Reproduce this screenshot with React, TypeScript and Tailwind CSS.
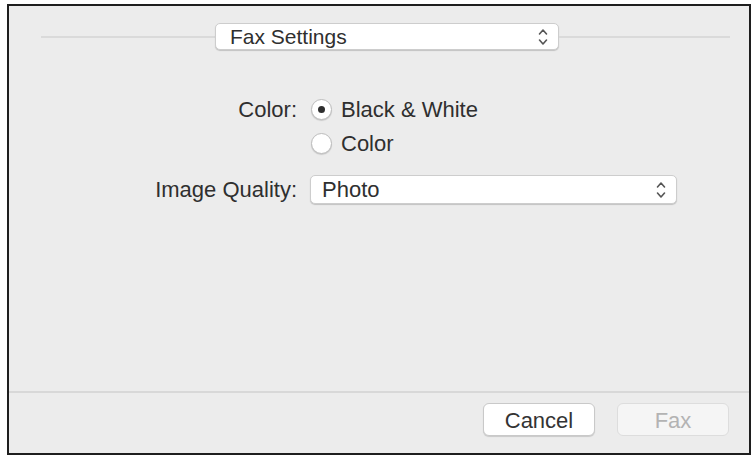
import React from "react";

function Chevrons() {
  return (
    <svg width="10" height="18" viewBox="0 0 10 18" fill="none">
      <path d="M1.5 6 L5 2 L8.5 6" stroke="#555" strokeWidth="1.6" strokeLinecap="round" strokeLinejoin="round" />
      <path d="M1.5 12 L5 16 L8.5 12" stroke="#555" strokeWidth="1.6" strokeLinecap="round" strokeLinejoin="round" />
    </svg>
  );
}

function PopUp({ label, className }: { label: string; className: string }) {
  return (
    <div
      className={`flex items-center justify-between bg-white border border-[#cdcdcd] rounded-[5px] shadow-[0_1px_1px_rgba(0,0,0,0.18)] pr-[10px] ${className}`}
    >
      <span>{label}</span>
      <Chevrons />
    </div>
  );
}

function Radio({ checked, label }: { checked?: boolean; label: string }) {
  return (
    <div className="flex items-center h-[34px] gap-[9px]">
      <div className="w-[21px] h-[21px] rounded-full bg-white border border-[#bdbdbd] shadow-[0_1px_1px_rgba(0,0,0,0.15)] flex items-center justify-center">
        {checked && <div className="w-[7px] h-[7px] rounded-full bg-[#2e2e2e]" />}
      </div>
      <span>{label}</span>
    </div>
  );
}

export default function App() {
  return (
    <div className="w-[754px] h-[457px] bg-white pt-[4px] pl-[7px] font-['Liberation_Sans',Arial,sans-serif] text-[22px] text-[#2f2f2f]">
      <div className="w-[744px] h-[451px] border-2 border-[#1e1e1e] bg-[#ececec] flex flex-col">
        {/* top selector */}
        <div className="flex items-center mt-[17px] pl-[32px] pr-[19px]">
          <div className="w-[174px] h-[2px] bg-[#dadada]" />
          <PopUp label="Fax Settings" className="w-[344px] h-[27px] pl-[14px] text-[21px]" />
          <div className="flex-1 h-[2px] bg-[#dadada]" />
        </div>

        {/* form */}
        <div className="flex mt-[42px]">
          <div className="w-[288px] h-[34px] flex items-center justify-end">Color:</div>
          <div className="flex flex-col pl-[14px]">
            <Radio checked label="Black & White" />
            <Radio label="Color" />
          </div>
        </div>
        <div className="flex items-center mt-[13px]">
          <div className="w-[288px] text-right">Image Quality:</div>
          <PopUp label="Photo" className="ml-[13px] w-[367px] h-[29px] pl-[11px]" />
        </div>

        <div className="flex-1" />

        {/* footer */}
        <div className="h-[2px] bg-[#d8d8d8]" />
        <div className="flex justify-end gap-[22px] pt-[10px] pb-[17px] pr-[20px]">
          <button className="w-[112px] h-[33px] bg-white border border-[#c9c9c9] rounded-[6px] shadow-[0_1px_1px_rgba(0,0,0,0.15)] text-[#333]">
            Cancel
          </button>
          <button className="w-[112px] h-[33px] bg-[#f5f5f5] border border-[#dddddd] rounded-[6px] text-[#b3b3b3]">
            Fax
          </button>
        </div>
      </div>
    </div>
  );
}
